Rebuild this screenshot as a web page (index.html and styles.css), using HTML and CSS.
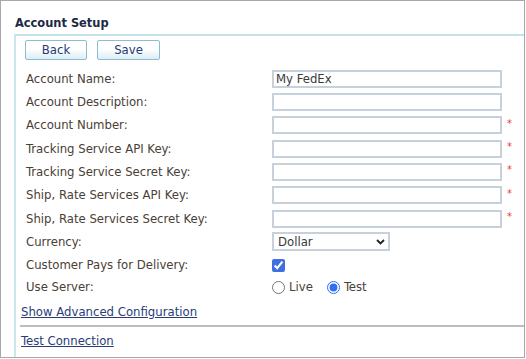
FILE: index.html
```html
<!DOCTYPE html>
<html>
<head>
<meta charset="utf-8">
<link rel="stylesheet" href="styles.css">
</head>
<body>
<div class="frame">
  <div class="title">Account Setup</div>
  <div class="panel">
    <div class="actions">
      <button class="btn btn-back">Back</button>
      <button class="btn btn-save">Save</button>
    </div>
    <div class="form">
      <label class="lbl">Account Name:</label>
      <input class="txt" type="text" value="My FedEx">
      <span class="req"></span>

      <label class="lbl">Account Description:</label>
      <input class="txt" type="text">
      <span class="req"></span>

      <label class="lbl">Account Number:</label>
      <input class="txt" type="text">
      <span class="req">*</span>

      <label class="lbl">Tracking Service API Key:</label>
      <input class="txt" type="text">
      <span class="req">*</span>

      <label class="lbl">Tracking Service Secret Key:</label>
      <input class="txt" type="text">
      <span class="req">*</span>

      <label class="lbl">Ship, Rate Services API Key:</label>
      <input class="txt" type="text">
      <span class="req">*</span>

      <label class="lbl">Ship, Rate Services Secret Key:</label>
      <input class="txt" type="text">
      <span class="req">*</span>

      <label class="lbl">Currency:</label>
      <div class="select-wrap">
        <select class="sel"><option>Dollar</option></select>
        <svg class="chev" width="9" height="6" viewBox="0 0 9 6"><path d="M1 1 L4.5 4.5 L8 1" fill="none" stroke="#222" stroke-width="1.8"/></svg>
      </div>
      <span class="req"></span>

      <label class="lbl">Customer Pays for Delivery:</label>
      <div class="cell"><input class="chk" type="checkbox" checked></div>
      <span class="req"></span>

      <label class="lbl">Use Server:</label>
      <div class="cell radios">
        <label class="opt"><input class="rad" type="radio" name="srv">Live</label>
        <label class="opt"><input class="rad" type="radio" name="srv" checked>Test</label>
      </div>
      <span class="req"></span>
    </div>
    <a class="link link-adv" href="#">Show Advanced Configuration</a>
    <hr class="sep">
    <a class="link link-test" href="#">Test Connection</a>
  </div>
</div>
</body>
</html>
```
FILE: styles.css
```css
html, body {
  margin: 0;
  padding: 0;
  background: #ffffff;
}

body {
  font-family: "DejaVu Sans Condensed", "DejaVu Sans", sans-serif;
  font-stretch: condensed;
  font-size: 13px;
  color: #4a4036;
}

.frame {
  box-sizing: border-box;
  width: 525px;
  height: 358px;
  border: 1px solid #a8a8a8;
  display: flex;
  flex-direction: column;
}

.title {
  box-sizing: border-box;
  height: 33px;
  padding: 14px 0 0 14px;
  font-weight: bold;
  font-size: 12.7px;
  line-height: 16px;
  color: #1c2a45;
}

.panel {
  flex: 1;
  margin-left: 13px;
  border-top: 2px solid #c2e2ea;
  border-left: 2px solid #cbe7ee;
  display: flex;
  flex-direction: column;
  align-items: flex-start;
}

.actions {
  display: flex;
  gap: 10px;
  padding: 4px 0 0 9px;
}

.btn {
  box-sizing: border-box;
  height: 20px;
  padding: 0;
  border: 1px solid #8cbdd1;
  border-radius: 2px;
  background: linear-gradient(#ffffff 0%, #ffffff 45%, #dcedf4 100%);
  font-family: inherit;
  font-stretch: condensed;
  font-size: 13px;
  color: #233c74;
  line-height: 16px;
}

.btn-back { width: 62px; }
.btn-save { width: 63px; }

.form {
  display: grid;
  grid-template-columns: 246px 230px auto;
  grid-template-rows: repeat(7, 23.33px) 23px 24px 20px;
  align-items: center;
  margin: 7px 0 0 10px;
}

.lbl {
  line-height: 16px;
  white-space: nowrap;
}

.txt {
  box-sizing: border-box;
  width: 230px;
  height: 18px;
  margin: 0;
  padding: 0 2px;
  border: 2px solid #c7d1dc;
  background: #fff;
  font-family: inherit;
  font-stretch: condensed;
  font-size: 13px;
  color: #3a3a3a;
  outline: none;
}

.req {
  margin-left: 5px;
  color: #f03a3a;
  font-size: 11px;
  line-height: 11px;
  align-self: center;
  position: relative;
  top: -2px;
}

.select-wrap {
  position: relative;
  width: 118px;
  height: 19px;
}

.sel {
  appearance: none;
  -webkit-appearance: none;
  box-sizing: border-box;
  width: 118px;
  height: 19px;
  margin: 0;
  padding: 0 0 0 4px;
  border: 2px solid #c7d1dc;
  border-radius: 0;
  background: #fff;
  font-family: inherit;
  font-stretch: condensed;
  font-size: 13px;
  color: #3a3a3a;
}

.chev {
  position: absolute;
  left: 104px;
  top: 7px;
  pointer-events: none;
}

.cell {
  display: flex;
  align-items: center;
}

.chk {
  width: 13px;
  height: 13px;
  margin: 0;
  accent-color: #3f6fe3;
}

.radios {
  gap: 14px;
}

.opt {
  display: flex;
  align-items: center;
  gap: 4px;
  line-height: 16px;
}

.rad {
  width: 13px;
  height: 13px;
  margin: 0;
  accent-color: #2f6ff0;
}

.link {
  color: #2a3d78;
  text-decoration: underline;
  line-height: 16px;
  margin-left: 5px;
}

.link-adv {
  margin-top: 7px;
}

.sep {
  align-self: stretch;
  margin: 5px 0 0 4px;
  border: 0;
  border-top: 2px solid #bdbdbd;
  height: 0;
}

.link-test {
  margin-top: 6px;
}
```
